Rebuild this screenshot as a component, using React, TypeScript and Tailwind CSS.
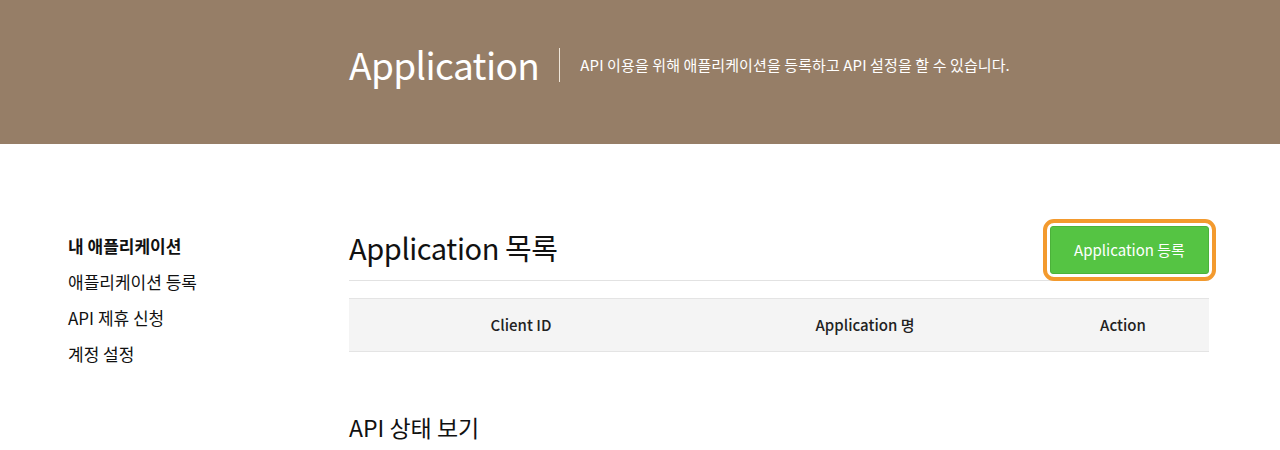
import React from "react";

const font = { fontFamily: '"Noto Sans CJK KR", "Noto Sans", sans-serif' };

export default function App() {
  return (
    <div className="w-[1280px] h-[450px] overflow-hidden bg-white text-[#111]" style={font}>
      <header className="h-[144px] bg-[#967e67] flex items-center pb-[15px]">
        <div className="ml-[349px] flex items-center">
          <h1 className="text-[37px] font-normal text-white leading-none tracking-[-0.6px]">Application</h1>
          <div className="w-px h-[34px] bg-[#efe6da] ml-[20px] mr-[20px]" />
          <p className="text-[15px] text-white leading-none tracking-[0.1px]">API 이용을 위해 애플리케이션을 등록하고 API 설정을 할 수 있습니다.</p>
        </div>
      </header>
      <div className="flex pl-[68px] pt-[75px]">
        <nav className="w-[281px] flex flex-col gap-[14px] pt-[16px] text-[17px] leading-[22px]">
          <a className="font-bold">내 애플리케이션</a>
          <a>애플리케이션 등록</a>
          <a>API 제휴 신청</a>
          <a>계정 설정</a>
        </nav>
        <main className="w-[860px]">
          <div className="flex items-end justify-between border-b border-[#e2e2e2] h-[62px]">
            <h2 className="text-[29px] font-normal leading-none pb-[18px] tracking-[-0.4px]">Application 목록</h2>
            <div className="border-[4px] border-[#f39a2e] rounded-[11px] p-[3px] -mr-[7px] mb-[-1px]">
              <button className="block w-[159px] h-[48px] bg-[#55c443] text-white text-[15px] rounded-[3px] border border-[#4bb23a]">
                Application 등록
              </button>
            </div>
          </div>
          <div className="mt-[17px] h-[54px] bg-[#f4f4f4] border-t border-b border-[#e4e4e4] grid grid-cols-[344px_344px_172px] items-center text-center text-[15px] font-medium text-[#222]">
            <div>Client ID</div>
            <div>Application 명</div>
            <div>Action</div>
          </div>
          <h3 className="mt-[64px] text-[23px] leading-none">API 상태 보기</h3>
        </main>
      </div>
    </div>
  );
}
